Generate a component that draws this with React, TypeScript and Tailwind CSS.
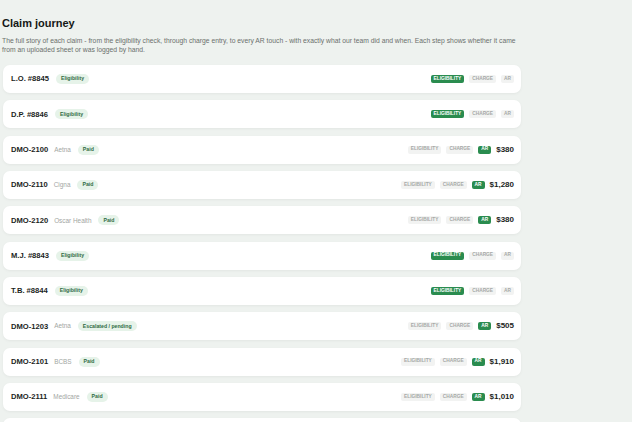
import React from "react";

type Stage = "eligibility" | "charge" | "ar";

type Claim = {
  id: string;
  payer?: string;
  status: string;
  stage: Stage;
  amount?: string;
};

const claims: Claim[] = [
  { id: "L.O. #8845", status: "Eligibility", stage: "eligibility" },
  { id: "D.P. #8846", status: "Eligibility", stage: "eligibility" },
  { id: "DMO-2100", payer: "Aetna", status: "Paid", stage: "ar", amount: "$380" },
  { id: "DMO-2110", payer: "Cigna", status: "Paid", stage: "ar", amount: "$1,280" },
  { id: "DMO-2120", payer: "Oscar Health", status: "Paid", stage: "ar", amount: "$380" },
  { id: "M.J. #8843", status: "Eligibility", stage: "eligibility" },
  { id: "T.B. #8844", status: "Eligibility", stage: "eligibility" },
  { id: "DMO-1203", payer: "Aetna", status: "Escalated / pending", stage: "ar", amount: "$505" },
  { id: "DMO-2101", payer: "BCBS", status: "Paid", stage: "ar", amount: "$1,910" },
  { id: "DMO-2111", payer: "Medicare", status: "Paid", stage: "ar", amount: "$1,010" },
  { id: "DMO-2112", payer: "Humana", status: "Paid", stage: "ar", amount: "$640" },
];

const stages: { key: Stage; label: string }[] = [
  { key: "eligibility", label: "Eligibility" },
  { key: "charge", label: "Charge" },
  { key: "ar", label: "AR" },
];

const StageChip = ({ label, active }: { label: string; active: boolean }) => (
  <span
    className={`rounded-[2px] px-[3px] h-[8px] flex items-center text-[4.8px] font-bold uppercase leading-none ${
      active ? "bg-[#2a8c4f] text-white" : "bg-[#f2f3f2] text-[#a6a9a7]"
    }`}
  >
    {label}
  </span>
);

const ClaimRow = ({ claim }: { claim: Claim }) => (
  <div className="h-[28px] shrink-0 rounded-[7px] bg-white shadow-[0_1px_3px_rgba(0,0,0,0.05)] flex items-center justify-between pl-[8px] pr-[7px]">
    <div className="flex items-center">
      <span className="text-[7.6px] font-bold text-[#1c1f1d]">{claim.id}</span>
      {claim.payer && (
        <span className="ml-[6px] text-[6.4px] text-[#a2a6a3]">{claim.payer}</span>
      )}
      <span className="ml-[7px] rounded-full bg-[#e6f3e9] px-[5px] h-[10px] flex items-center text-[5.2px] font-bold text-[#2f6b43] leading-none">
        {claim.status}
      </span>
    </div>
    <div className="flex items-center gap-[5px]">
      {stages.map((s) => (
        <StageChip key={s.key} label={s.label} active={s.key === claim.stage} />
      ))}
      {claim.amount && (
        <span className="text-[8px] font-bold text-[#1c1f1d]">{claim.amount}</span>
      )}
    </div>
  </div>
);

export default function App() {
  return (
    <div
      className="w-[632px] h-[422px] overflow-hidden bg-[#eef2ef] px-[2px] pt-[16px]"
      style={{ fontFamily: '"Liberation Sans", Arial, sans-serif' }}
    >
      <h1 className="text-[11px] leading-[15px] font-bold text-[#151816]">Claim journey</h1>
      <p className="mt-[5px] w-[521px] text-[6.78px] leading-[9px] text-[#6b706d]">
        The full story of each claim - from the eligibility check, through charge entry, to every AR
        touch - with exactly what our team did and when. Each step shows whether it came from an
        uploaded sheet or was logged by hand.
      </p>
      <div className="mt-[11px] ml-[1px] w-[518px] flex flex-col gap-[7.33px]">
        {claims.map((c) => (
          <ClaimRow key={c.id} claim={c} />
        ))}
      </div>
    </div>
  );
}
